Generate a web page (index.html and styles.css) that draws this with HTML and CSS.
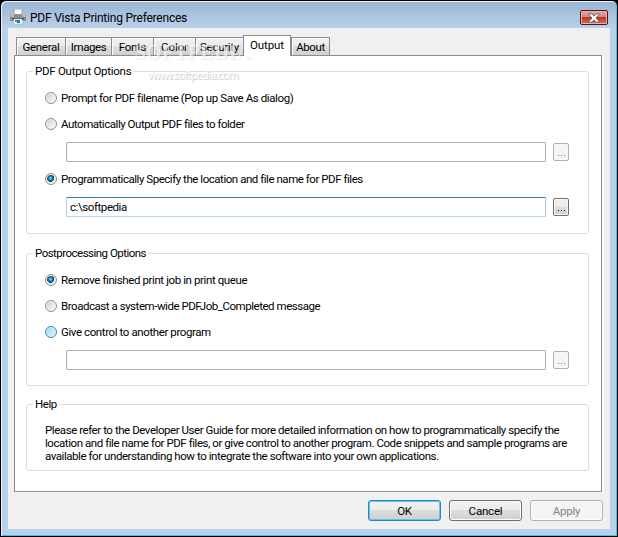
FILE: index.html
```html
<!DOCTYPE html>
<html lang="en">
<head>
<meta charset="utf-8">
<title>PDF Vista Printing Preferences</title>
<link rel="stylesheet" href="styles.css">
</head>
<body>
<div class="window">
  <header class="titlebar">
    <svg class="printer" width="16" height="16" viewBox="0 0 16 16">
      <path d="M4 0h8v6H4z" fill="#fff" stroke="#8c9297" stroke-width=".8"/>
      <path d="M1 5h14l1 2v5H0V7z" fill="#8b8f93"/>
      <path d="M1 5h3v3h8V5h3l.5 3H.5z" fill="#b9bdc0"/>
      <path d="M2 9h12v1.500H2z" fill="#4c5257"/>
      <path d="M4 10h8l1 5H3z" fill="#f8fbfd" stroke="#9aabba" stroke-width=".6"/>
      <path d="M5 11h2v2H5z" fill="#35a65b"/><path d="M7 11h3v3H7z" fill="#2379c8"/>
      <path d="M13 7h1v1h-1z" fill="#62d45e"/>
    </svg>
    <h1 class="title">PDF Vista Printing Preferences</h1>
    <div class="close">
      <svg width="12" height="10" viewBox="0 0 12 10"><path d="M1 .8h3l2 2.300L8 .8h3v1L8 5l3 3.200v1H8L6 6.900 4 9.200H1v-1L4 5 1 1.800z" fill="#fff" stroke="#555b6d" stroke-width=".9"/></svg>
    </div>
  </header>
  <main class="client">
    <nav class="tabs">
      <div class="tab general"><span>General</span></div>
      <div class="tab images"><span>Images</span></div>
      <div class="tab fonts"><span>Fonts</span></div>
      <div class="tab color"><span>Color</span></div>
      <div class="tab security"><span>Security</span></div>
      <div class="tab output active"><span>Output</span></div>
      <div class="tab about"><span>About</span></div>
    </nav>
    <div class="panel">
      <section class="group output-options">
        <h2 class="legend l1">PDF Output Options</h2>
        <div class="option"><i class="radio"></i><span class="t1">Prompt for PDF filename (Pop up Save As dialog)</span></div>
        <div class="option"><i class="radio"></i><span class="t2">Automatically Output PDF files to folder</span></div>
        <div class="field"><div class="input"></div><div class="browse disabled"><b></b><b></b><b></b></div></div>
        <div class="option"><i class="radio checked"></i><span class="t2">Programmatically Specify the location and file name for PDF files</span></div>
        <div class="field"><div class="input focused"><span>c:\softpedia</span></div><div class="browse"><b></b><b></b><b></b></div></div>
      </section>
      <section class="group post-options">
        <h2 class="legend l2">Postprocessing Options</h2>
        <div class="option"><i class="radio checked"></i><span class="t1">Remove finished print job in print queue</span></div>
        <div class="option"><i class="radio"></i><span class="t2">Broadcast a system-wide PDFJob_Completed message</span></div>
        <div class="option"><i class="radio hot"></i><span class="t1">Give control to another program</span></div>
        <div class="field"><div class="input"></div><div class="browse disabled"><b></b><b></b><b></b></div></div>
      </section>
      <section class="group help">
        <h2 class="legend">Help</h2>
        <p class="copy">Please refer to the Developer User Guide for more detailed information on how to programmatically specify the<br>location and file name for PDF files, or give control to another program. Code snippets and sample programs are<br>available for understanding how to integrate the software into your own applications.</p>
      </section>
    </div>
    <footer class="actions">
      <div class="button default"><span>OK</span></div>
      <div class="button"><span>Cancel</span></div>
      <div class="button disabled"><span>Apply</span></div>
    </footer>
  </main>
  <div class="watermark"><div class="brand">SOFTPEDIA</div><div class="site">www.softpedia.com</div></div>
</div>
</body>
</html>
```
FILE: styles.css
```css
* { box-sizing: border-box; }
body {
  margin: 0;
  background: #000;
  color: #000;
  font: 11.5px/13px Roboto, sans-serif;
  letter-spacing: -.42px;
  white-space: nowrap;
}
h1, h2, p { margin: 0; font: inherit; }
.window {
  position: relative;
  width: 618px;
  height: 537px;
  padding: 0 6px 6px;
  border: 1px solid #000;
  border-radius: 6px 6px 0 0;
  background: linear-gradient(#9ab4d2, #b9d1ea 27px);
  box-shadow: inset 1px 1px #eef6fc, inset -1px -1px #35c9e8;
}
.titlebar { display: flex; height: 27px; padding: 8px 2px 0 3px; }
.printer { flex: none; }
.title { margin: 3px 0 0 4px; font-size: 12px; letter-spacing: -.22px; }
.close {
  display: flex;
  align-items: center;
  justify-content: center;
  width: 28px;
  height: 15px;
  margin: 1px 1px 0 auto;
  border: 1px solid #4b1820;
  border-radius: 2px;
  background: linear-gradient(#e7a69b, #d98479 48%, #b83622 50%, #d0735c);
  box-shadow: inset 0 0 0 1px #e9b0a6;
}
.client { width: 602px; height: 501px; margin-left: 1px; padding: 7px 8px 0 6px; background: #f0f0f0; }
.tabs { display: flex; align-items: flex-end; height: 20px; padding-left: 2px; }
.tab {
  height: 18px;
  padding-top: 3px;
  border: 1px solid #898c95;
  border-bottom: 0;
  border-right: 0;
  background: linear-gradient(#f2f2f2, #ebebeb 48%, #dedede 50%, #d0d0d0);
  box-shadow: inset 1px 1px #fcfcfc;
  text-align: center;
}
.general { width: 49px; letter-spacing: -.3px; }
.images { width: 46px; }
.fonts { width: 42px; letter-spacing: -.3px; }
.color { width: 42px; letter-spacing: -.1px; }
.security { width: 48px; letter-spacing: -.3px; }
.output { width: 48px; letter-spacing: -.1px; }
.about { width: 39px; border-right: 1px solid #898c95; }
.active { z-index: 1; height: 21px; margin-bottom: -1px; border-right: 1px solid #898c95; background: #fff; }
.panel {
  width: 588px;
  height: 437px;
  padding: 15px 12px 0 11px;
  border: 1px solid #898c95;
  background: #fff;
  box-shadow: 2px 1px #fcfcfc;
}
.group { width: 563px; border: 1px solid #d5dfe8; border-radius: 3px; }
.output-options { height: 163px; }
.post-options { height: 133px; margin-top: 19px; }
.help { height: 67px; margin-top: 18px; }
.legend { width: max-content; height: 13px; margin: -7px 0 0 6px; padding: 0 2px; background: #fff; }
.l1 { letter-spacing: -.27px; }
.l2 { letter-spacing: -.52px; }
.t1 { letter-spacing: -.4px; }
.t2 { letter-spacing: -.46px; }
.option { display: flex; align-items: center; height: 26px; padding-left: 18px; }
.legend + .option { margin-top: 7px; }
.radio {
  flex: none;
  width: 12px;
  height: 12px;
  margin-right: 4px;
  border: 1px solid #8e8f8f;
  border-radius: 50%;
  background: linear-gradient(135deg, #c6c9cd, #f4f4f4 75%);
  box-shadow: inset 0 0 0 1px #f4f4f4;
}
.checked { background: radial-gradient(circle at 45% 42%, #9fe5fb 0, #2596cd 18%, #0d405f 43%, #e7eaec 48%); }
.hot { border-color: #4782a8; background: linear-gradient(135deg, #9dd4f0, #e2f6fe); box-shadow: inset 0 0 0 1px #d8f1fc; }
.field { display: flex; align-items: center; width: 503px; height: 20px; margin: 5px 0 4px 39px; }
.input { width: 480px; height: 20px; padding: 3px; border: 1px solid #afafaf; border-radius: 1px; }
.focused { border-color: #3d7bad #a4c9e3 #b7d9ed #b5cfe7; }
.browse {
  display: flex;
  justify-content: center;
  gap: 2px;
  width: 16px;
  height: 18px;
  margin-left: 7px;
  padding-top: 11px;
  border: 1px solid #707070;
  border-radius: 2px;
  background: linear-gradient(#f2f2f2, #ebebeb 48%, #ddd 50%, #cfcfcf);
  box-shadow: inset 0 0 0 1px #f8f8f8;
}
.browse b { width: 1px; height: 1px; background: #000; }
.browse.disabled { border-color: #adb2b5; background: #f4f4f4; }
.browse.disabled b { background: #838383; }
.copy { padding: 13px 0 0 18px; letter-spacing: -.442px; }
.actions { display: flex; justify-content: flex-end; gap: 8px; margin: 8px -1px 0 0; }
.button {
  width: 73px;
  height: 21px;
  padding-top: 4px;
  border: 1px solid #707070;
  border-radius: 3px;
  background: linear-gradient(#f2f2f2, #ebebeb 48%, #ddd 50%, #cfcfcf);
  box-shadow: inset 0 0 0 1px #fbfbfb;
  letter-spacing: -.2px;
  text-align: center;
}
.button.default { border-color: #3c7fb1; box-shadow: inset 0 0 0 1px #48d0f8; }
.button.disabled { border-color: #adb2b5; background: #f4f4f4; color: #838383; }
.watermark { position: absolute; left: 130px; top: 40px; width: 124px; color: #fff9; text-align: center; }
.brand { font: bold 20px/22px "Liberation Serif", serif; letter-spacing: .3px; text-shadow: 1px 1px 1px #9993; }
.site { margin-top: 5px; color: #fff; font: 11px/13px "Open Sans", sans-serif; letter-spacing: -.7px; text-shadow: 1px 1px 1px #999a; }
```
